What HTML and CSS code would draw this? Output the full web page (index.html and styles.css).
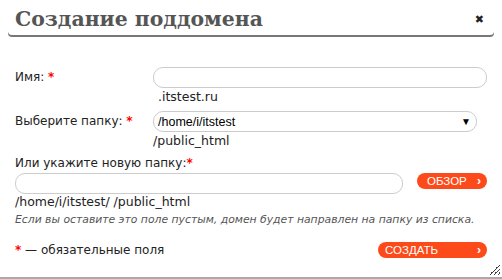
FILE: index.html
```html
<!DOCTYPE html>
<html lang="ru">
<head>
  <meta charset="UTF-8" />
  <title>Создание поддомена</title>
  <link rel="stylesheet" href="styles.css">
</head>
<body>
  <div class="dialog">
    <div class="dialog-head">
      <h1>Создание поддомена</h1>
      <span class="close">&#10006;</span>
    </div>

    <form class="form">
      <div class="row">
        <label class="label">Имя: <span class="req">*</span></label>
        <div class="field">
          <input type="text" class="input">
          <div class="suffix">.itstest.ru</div>
        </div>
      </div>

      <div class="row">
        <label class="label">Выберите папку: <span class="req">*</span></label>
        <div class="field">
          <div class="select">
            <span>/home/i/itstest</span>
            <span class="caret">&#9660;</span>
          </div>
          <div class="path">/public_html</div>
        </div>
      </div>

      <div class="block">
        <label class="label">Или укажите новую папку:<span class="req">*</span></label>
        <div class="browse-row">
          <input type="text" class="input">
          <button type="button" class="btn btn-browse">ОБЗОР <span class="chev">&#8250;</span></button>
        </div>
        <div class="path">/home/i/itstest/ /public_html</div>
        <div class="hint">Если вы оставите это поле пустым, домен будет направлен на папку из списка.</div>
      </div>

      <div class="footer">
        <span class="note"><span class="req">*</span> — обязательные поля</span>
        <button type="button" class="btn btn-create">СОЗДАТЬ <span class="chev">&#8250;</span></button>
      </div>
    </form>
    <span class="grip"></span>
  </div>
</body>
</html>
```

FILE: styles.css
```css
html, body {
  margin: 0;
  padding: 0;
  background: #fff;
}

.dialog {
  position: relative;
  width: 502px;
  height: 279px;
  box-sizing: border-box;
  border-bottom: 2px solid #aaa;
  font-family: "DejaVu Sans", Verdana, sans-serif;
  color: #222;
}

.dialog-head {
  margin: 0 8px;
  height: 35px;
  padding: 0 7px;
  display: flex;
  align-items: center;
  justify-content: space-between;
  border-radius: 0 0 4px 4px;
  box-shadow: 0 2px 0 #777;
}

.dialog-head h1 {
  margin: 0;
  padding-top: 3px;
  font-family: "DejaVu Serif", Georgia, serif;
  font-size: 20.4px;
  font-weight: bold;
  color: #555;
}

.close {
  font-size: 11px;
  color: #222;
  margin-right: 3px;
  margin-top: 3px;
}

.form {
  padding: 32px 15px 0 15px;
}

.row {
  display: grid;
  grid-template-columns: 138px 1fr;
  margin-bottom: 6px;
}

.label {
  font-size: 12px;
  padding-top: 2px;
  line-height: 16px;
}

.req {
  color: #f00;
  font-weight: bold;
}

.field {
  display: flex;
  flex-direction: column;
}

.input {
  box-sizing: border-box;
  height: 21px;
  width: 100%;
  border: 1px solid #ccc;
  border-radius: 10px;
  background: #fff;
  margin: 0;
}

.suffix {
  font-size: 12.5px;
  line-height: 17px;
  padding-left: 5px;
}

.select {
  box-sizing: border-box;
  height: 21px;
  width: 324px;
  border: 1px solid #ccc;
  border-radius: 10px;
  padding: 0 5px 0 4px;
  display: flex;
  align-items: center;
  justify-content: space-between;
  font-family: "Liberation Sans", Arial, sans-serif;
  font-size: 12.5px;
  color: #000;
}

.caret {
  font-size: 10px;
}

.path {
  font-size: 12.5px;
  line-height: 17px;
}

.block .label {
  display: block;
  padding-top: 0;
  line-height: 16px;
}

.browse-row {
  display: flex;
  align-items: flex-start;
  gap: 14px;
  margin-top: 2px;
}

.browse-row .input {
  width: 388px;
}

.block .path {
  line-height: 15px;
}

.btn {
  border: none;
  background: #fc4a1a;
  color: #fff;
  font-family: "Liberation Sans", Arial, sans-serif;
  font-size: 11.5px;
  height: 16px;
  border-radius: 8px;
  padding: 0 6px 0 10px;
  display: flex;
  align-items: center;
  justify-content: space-between;
  margin: 0;
}

.chev {
  font-size: 12px;
  font-weight: bold;
}

.btn-browse {
  width: 70px;
}

.btn-create {
  width: 109px;
  padding-left: 7px;
}

.hint {
  font-size: 10.8px;
  font-style: italic;
  color: #555;
  line-height: 15px;
  margin-top: 3px;
}

.footer {
  display: flex;
  justify-content: space-between;
  align-items: center;
  margin-top: 15px;
}

.note {
  font-size: 12px;
}

.grip {
  position: absolute;
  right: 2px;
  bottom: 2px;
  width: 10px;
  height: 10px;
  background: linear-gradient(135deg, transparent 45%, #444 45%, #444 52%, transparent 52%, transparent 65%, #444 65%, #444 72%, transparent 72%, transparent 85%, #444 85%, #444 92%, transparent 92%);
}
```
